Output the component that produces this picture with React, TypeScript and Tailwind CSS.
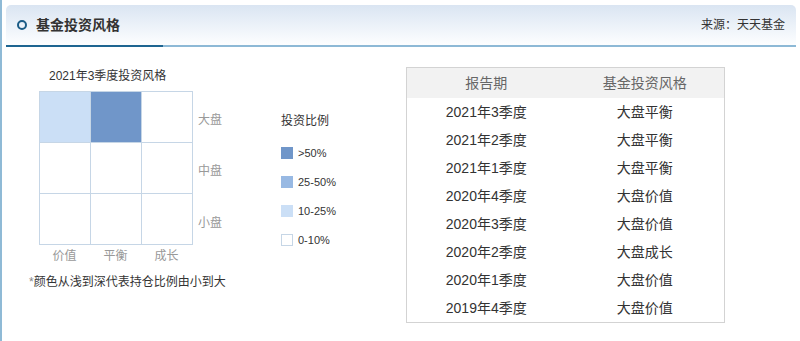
import React from "react";

const font = { fontFamily: '"Liberation Sans", "Noto Sans CJK SC", sans-serif' };

const cells = [
  "bg-[#cbdff6]", "bg-[#7096c9]", "bg-white",
  "bg-white", "bg-white", "bg-white",
  "bg-white", "bg-white", "bg-white",
];

const rows: [string, string][] = [
  ["2021年3季度", "大盘平衡"],
  ["2021年2季度", "大盘平衡"],
  ["2021年1季度", "大盘平衡"],
  ["2020年4季度", "大盘价值"],
  ["2020年3季度", "大盘价值"],
  ["2020年2季度", "大盘成长"],
  ["2020年1季度", "大盘价值"],
  ["2019年4季度", "大盘价值"],
];

const legend: [string, string][] = [
  ["bg-[#7096c9]", ">50%"],
  ["bg-[#98b9e3]", "25-50%"],
  ["bg-[#cbdff6]", "10-25%"],
  ["bg-white border border-[#c6d6e6]", "0-10%"],
];

export default function App() {
  return (
    <div
      style={font}
      className="w-[800px] h-[341px] bg-white border-l-2 border-[#8fbad6] pl-1 pr-1 pt-[5px] overflow-hidden"
    >
      {/* header */}
      <div className="flex flex-col">
        <div className="h-[40px] rounded-t-[5px] bg-gradient-to-b from-[#dae5f2] to-[#fdfeff] flex items-center pl-[11px] pr-[11px]">
          <span className="w-[10px] h-[10px] rounded-full border-2 border-[#1b5c86] mr-[9px] -mt-[1px]" />
          <span className="text-[14px] font-bold text-[#333] leading-none">基金投资风格</span>
          <span className="ml-auto text-[12px] text-[#333] leading-none">来源：天天基金</span>
        </div>
        <div className="flex h-[2px]">
          <div className="w-[157px] bg-[#1e6591]" />
          <div className="flex-1 bg-[#8db9d6]" />
        </div>
      </div>

      {/* body */}
      <div className="flex">
        <div className="w-[400px] flex flex-col">
          <div className="flex pt-[21px]">
            <div className="w-[275px] pl-[33px]">
              <div className="pl-[10px] text-[12px] leading-[16px] text-[#333]">2021年3季度投资风格</div>
              <div className="flex mt-[7px]">
                <div className="grid grid-cols-[50px_50px_50px] grid-rows-[50px_50px_50px] gap-px p-px bg-[#c6d6e6] w-[154px]">
                  {cells.map((c, i) => (
                    <div key={i} className={c} />
                  ))}
                </div>
                <div className="flex flex-col ml-[5px] pt-[1px] text-[12px] text-[#999]">
                  <div className="h-[51px] flex items-center pt-[4px]">大盘</div>
                  <div className="h-[51px] flex items-center pt-[5px]">中盘</div>
                  <div className="h-[51px] flex items-center pt-[6px]">小盘</div>
                </div>
              </div>
              <div className="flex w-[154px] mt-[3px] text-[12px] leading-[16px] text-[#999]">
                <div className="w-[51px] text-center">价值</div>
                <div className="w-[51px] text-center">平衡</div>
                <div className="w-[51px] text-center">成长</div>
              </div>
            </div>
            <div className="flex flex-col pt-[45px]">
              <div className="text-[12px] leading-[16px] text-[#333]">投资比例</div>
              <div className="flex flex-col gap-[17px] mt-[18px]">
                {legend.map(([c, t]) => (
                  <div key={t} className="flex items-center h-[12px]">
                    <span className={`w-[12px] h-[12px] ${c}`} />
                    <span className="ml-[5px] text-[11px] leading-[12px] text-[#333]">{t}</span>
                  </div>
                ))}
              </div>
            </div>
          </div>
          <div className="ml-[23px] mt-[10px] text-[12px] leading-[16px] text-[#333]">
            <span className="text-[#888]">*</span>颜色从浅到深代表持仓比例由小到大
          </div>
        </div>

        <div className="mt-[20px] w-[319px] border border-[#d3d3d3] flex flex-col">
          <div className="h-[30px] bg-[#f2f2f2] flex items-center text-[14px] text-[#666]">
            <div className="w-1/2 text-center">报告期</div>
            <div className="w-1/2 text-center">基金投资风格</div>
          </div>
          {rows.map(([a, b]) => (
            <div key={a} className="h-[28px] flex items-center text-[14px] text-[#333]">
              <div className="w-1/2 text-center">{a}</div>
              <div className="w-1/2 text-center">{b}</div>
            </div>
          ))}
        </div>
      </div>
    </div>
  );
}
